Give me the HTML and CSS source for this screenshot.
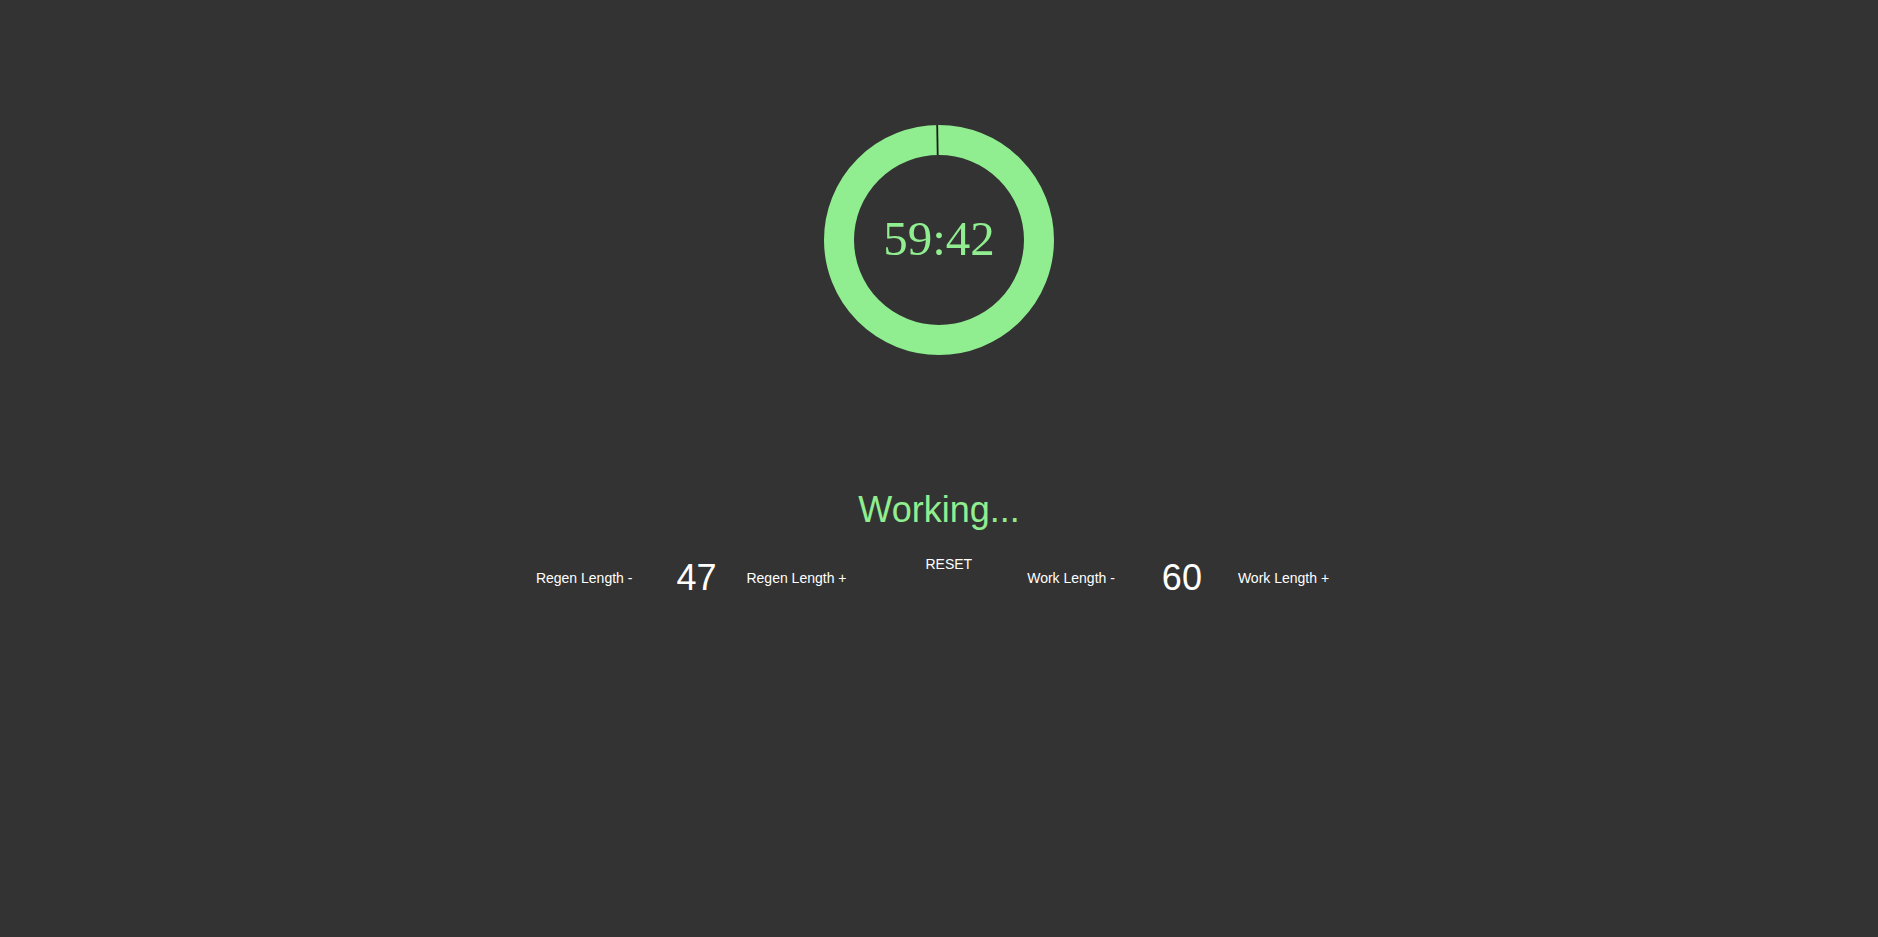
FILE: index.html
```html
<!DOCTYPE html>
<html>
<head>
<meta charset="utf-8">
<link rel="stylesheet" href="styles.css">
</head>
<body>
<main class="app">
  <div class="timer">
    <svg class="ring" width="230" height="230" viewBox="0 0 230 230">
      <circle cx="115" cy="115" r="100" fill="none" stroke="#90ee90" stroke-width="30"/>
      <line x1="113.2" y1="0" x2="113.7" y2="30" stroke="#1c1c1c" stroke-width="1.8"/>
    </svg>
    <div class="time">59:42</div>
  </div>
  <h1 class="status">Working...</h1>
  <div class="controls">
    <button class="btn">Regen Length -</button>
    <span class="num num-regen">47</span>
    <button class="btn btn-plus">Regen Length +</button>
    <button class="btn reset">RESET</button>
    <button class="btn work-minus">Work Length -</button>
    <span class="num num-work">60</span>
    <button class="btn work-plus">Work Length +</button>
  </div>
</main>
</body>
</html>
```
FILE: styles.css
```css
html, body {
  margin: 0;
  padding: 0;
  background: #333333;
  height: 100%;
}
body {
  font-family: "Liberation Sans", Arial, sans-serif;
  color: #ffffff;
}
.app {
  display: flex;
  flex-direction: column;
  align-items: center;
  padding-top: 125px;
}
.timer {
  position: relative;
  width: 230px;
  height: 230px;
}
.ring {
  display: block;
}
.time {
  position: absolute;
  inset: 0;
  display: flex;
  align-items: center;
  justify-content: center;
  padding-bottom: 4px;
  font-family: "Liberation Serif", "Times New Roman", serif;
  font-size: 49px;
  color: #90ee90;
}
.status {
  margin: 134px 0 0;
  font-size: 36px;
  font-weight: normal;
  color: #90ee90;
  line-height: normal;
}
.controls {
  display: flex;
  align-items: center;
  margin-top: 26px;
  padding-right: 13px;
}
.btn {
  background: none;
  border: none;
  padding: 0;
  margin: 0;
  color: #ffffff;
  font-family: "Liberation Sans", Arial, sans-serif;
  font-size: 14px;
  line-height: normal;
}
.num {
  font-size: 36px;
  line-height: normal;
  margin-left: 44px;
}
.btn-plus {
  margin-left: 30px;
}
.reset {
  align-self: flex-start;
  margin-left: 79px;
  margin-top: -1px;
}
.work-minus {
  margin-left: 55px;
}
.num-work {
  margin-left: 47px;
}
.work-plus {
  margin-left: 36px;
}
```
